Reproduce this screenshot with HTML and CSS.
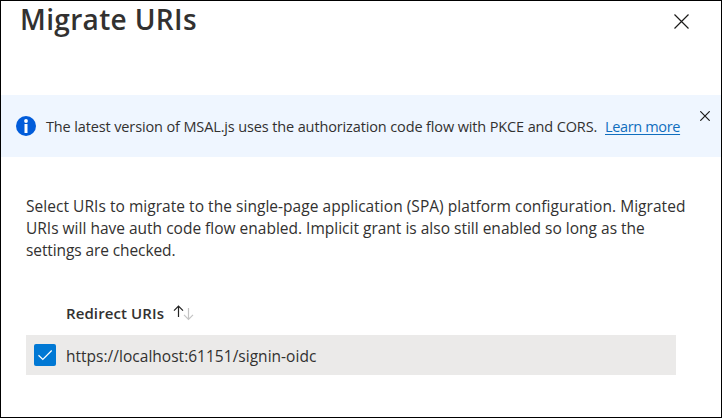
FILE: index.html
```html
<!DOCTYPE html>
<html lang="en">
<head>
<meta charset="utf-8">
<title>Migrate URIs</title>
<link rel="stylesheet" href="styles.css">
</head>
<body>
<main class="panel">
  <header class="header">
    <h1 class="title">Migrate URIs</h1>
    <button class="close" aria-label="Close"><svg width="15" height="15" viewBox="0 0 15 15"><path d="M0.5 0.5 14.5 14.5M14.5 0.5 0.5 14.5"/></svg></button>
  </header>
  <section class="notice">
    <svg class="info" width="20" height="20" viewBox="0 0 20 20"><circle cx="10" cy="10" r="10" fill="#015cda"/><circle cx="10" cy="5" r="1.9" fill="#fff"/><path d="M8.5 8h3v9h-3z" fill="#fff"/></svg>
    <p class="message">The latest version of MSAL.js uses the authorization code flow with PKCE and CORS.</p>
    <a class="link" href="#">Learn more</a>
    <button class="dismiss" aria-label="Dismiss"><svg width="10" height="10" viewBox="0 0 10 10"><path d="M0.3 0.3 9.7 9.7M9.7 0.3 0.3 9.7"/></svg></button>
  </section>
  <p class="description"><span class="line first">Select URIs to migrate to the single-page application (SPA) platform configuration. Migrated</span> <span class="line second">URIs will have auth code flow enabled. Implicit grant is also still enabled so long as the</span> <span class="line third">settings are checked.</span></p>
  <section class="list">
    <div class="list-header">
      <span class="column">Redirect URIs</span>
      <svg class="sort" width="21" height="16" viewBox="0 0 21 16"><path d="M5.5 12V1.2M1 5.7 5.5 1.2 10 5.7" stroke="#222" stroke-width="1.2"/><path d="M15.5 3v11.3M11 9.8l4.5 4.5 4.5-4.5" stroke="#c4c4c4" stroke-width="1.2"/></svg>
    </div>
    <div class="row">
      <span class="checkbox"><svg width="22" height="22" viewBox="0 0 22 22"><path d="M4.5 11.3 8.8 15.5 17.7 6.5"/></svg></span>
      <span class="uri">https://localhost:61151/signin-oidc</span>
    </div>
  </section>
</main>
</body>
</html>
```
FILE: styles.css
```css
* { box-sizing: border-box; }
body { margin: 0; background: #fff; font-family: "Open Sans", sans-serif; font-size: 15.5px; color: #323130; }
h1, p { margin: 0; }
button { border: 0; padding: 0; background: none; display: flex; }
svg { display: block; fill: none; flex: none; }
.panel { width: 722px; height: 418px; border: 1px solid #000; overflow: hidden; }
.header { height: 94px; display: flex; justify-content: space-between; padding: 0 32px 0 19px; }
.title { font-size: 28px; line-height: 37px; font-weight: 600; letter-spacing: 0.34px; white-space: nowrap; }
.close { margin-top: 13px; height: 15px; }
.close path, .dismiss path { stroke: #1b1a19; stroke-width: 1.2; }
.notice { height: 62px; background: #eff6ff; display: flex; align-items: center; padding: 0 11px 0 15px; font-size: 14.5px; }
.message { margin-left: 10px; width: 559px; white-space: nowrap; letter-spacing: -0.13px; }
.link { color: #106ebe; white-space: nowrap; letter-spacing: -0.35px; text-underline-offset: 2px; text-decoration-thickness: 1px; }
.dismiss { margin: 16px 0 0 auto; align-self: flex-start; }
.description { margin: 38px 0 0 25px; line-height: 22px; }
.line { display: block; white-space: nowrap; }
.first { letter-spacing: 0.04px; }
.third { letter-spacing: -0.1px; }
.list { margin: 35px 45px 0 25px; }
.list-header { height: 39px; padding-left: 40px; display: flex; }
.column { width: 107px; line-height: 34px; font-weight: 600; font-size: 15px; letter-spacing: 0.1px; white-space: nowrap; }
.sort { margin-top: 9px; }
.row { height: 40px; background: #ebeae9; display: flex; align-items: center; padding-left: 8px; }
.checkbox { width: 22px; height: 22px; border-radius: 2px; background: #0078d4; margin-right: 10px; }
.checkbox path { stroke: #fff; stroke-width: 1.2; }
.uri { white-space: nowrap; line-height: 20px; padding-top: 2px; letter-spacing: 0.02px; }
```
